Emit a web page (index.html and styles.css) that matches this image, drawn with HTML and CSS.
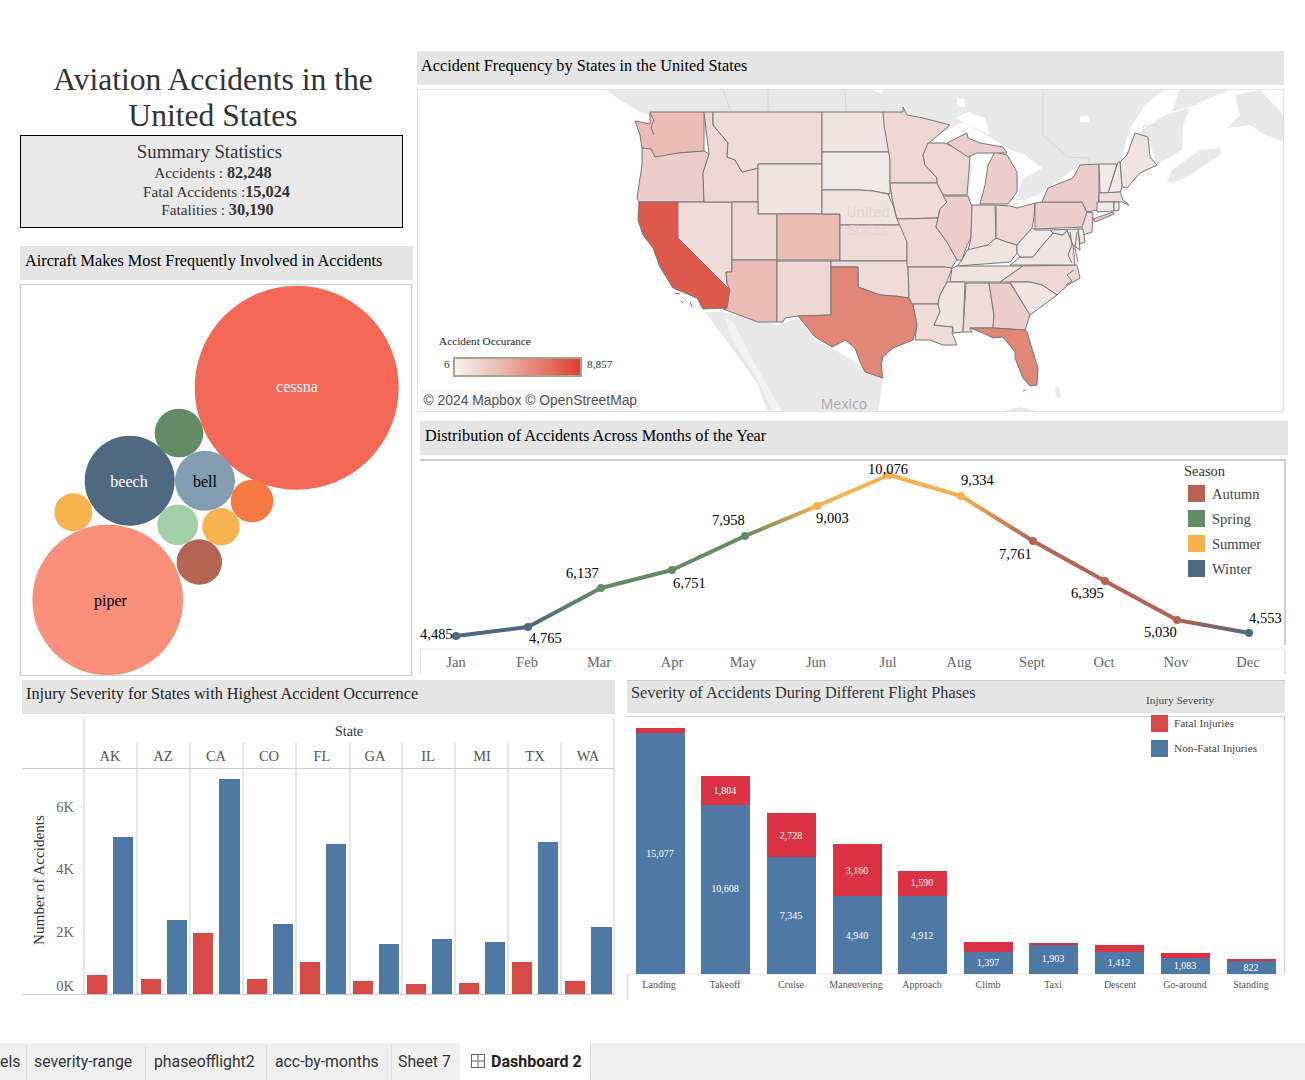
FILE: index.html
```html
<!DOCTYPE html>
<html lang="en">
<head>
<meta charset="utf-8">
<title>Aviation Accidents in the United States</title>
<link rel="stylesheet" href="styles.css">
</head>
<body>
<main class="dashboard">
  <div class="top-row">
    <section class="left-col">
      <h1 class="title">Aviation Accidents in the<br>United States</h1>
      <div class="stats">
        <h2 class="stats-head">Summary Statistics</h2>
        <p class="stat stat-a">Accidents : <b>82,248</b></p>
        <p class="stat stat-b">Fatal Accidents :<b>15,024</b></p>
        <p class="stat stat-c">Fatalities : <b>30,190</b></p>
      </div>
      <h2 class="head head-makes">Aircraft Makes Most Frequently Involved in Accidents</h2>
      <svg class="chart bubbles" viewBox="20 284 392 392" role="img" aria-label="Bubble chart of aircraft makes">
        <circle class="b-red" cx="296.7" cy="387.7" r="102"/>
        <circle class="b-salmon" cx="107.7" cy="600" r="75.3"/>
        <circle class="b-navy" cx="129.7" cy="480.7" r="45"/>
        <circle class="b-steel" cx="205" cy="480.7" r="30"/>
        <circle class="b-green" cx="179" cy="433" r="24.3"/>
        <circle class="b-yellow" cx="73.3" cy="512.3" r="19"/>
        <circle class="b-mint" cx="177.7" cy="524.7" r="20.3"/>
        <circle class="b-yellow" cx="221" cy="526.7" r="18.7"/>
        <circle class="b-orange" cx="252" cy="501" r="21.3"/>
        <circle class="b-brown" cx="199.3" cy="562" r="22.7"/>
        <text class="bub-label light" x="297" y="392">cessna</text>
        <text class="bub-label" x="110.500" y="606">piper</text>
        <text class="bub-label light" x="129" y="487">beech</text>
        <text class="bub-label" x="205" y="487">bell</text>
      </svg>
    </section>
    <section class="right-col">
      <h2 class="head head-map">Accident Frequency by States in the United States</h2>
      <svg class="chart map" viewBox="417 89 867 323" role="img" aria-label="Map of accident frequency by state">
        <!-- land -->
        <polygon class="land" points="605,89 1165,89 1145,105 1130,128 1125,145 1120,165 1080,165 1030,200 900,200 640,112 620,100"/>
        <polygon class="land" points="1135,135 1165,115 1190,108 1183,125 1182,150 1157,165 1148,137"/>
        <polygon class="land" points="1167,182 1172,170 1200,150 1220,148 1222,153 1190,175 1172,183"/>
        <polygon class="land" points="1227,128 1240,115 1235,95 1260,90 1284,115 1284,142 1265,135 1250,125"/>
        <polygon class="land" points="1180,89 1230,89 1195,105 1172,112"/>
        <polygon class="land" points="705,312 723,312 777,325 798,318 815,340 835,350 860,365 883,378 878,412 768,412 758,385 735,352"/>
        <polygon class="sliver" points="724,317 733,322 752,358 775,400 783,412 773,412 755,375 735,345"/>
        <polygon class="land" points="1000,412 1020,407 1040,412"/>
        <polygon class="land" points="1055,388 1059,386 1061,398 1056,396"/>
        <!-- lakes and small water -->
        <polygon class="water" points="922,142 963,122 995,140 1010,150 980,143 968,138 967,133 947,143"/>
        <polygon class="water" points="955,118 968,112 985,118 990,135 975,128"/>
        <polygon class="water" points="968,157 977,153 995,152 988,165 985,185 980,204 972,205 969,190 972,170"/>
        <polygon class="water" points="1003,147 1025,155 1042,168 1022,180 1018,195 1012,205 1045,192 1050,186 1074,177 1070,183 1050,192 1010,209 1000,200"/>
        <polygon class="water" points="957,98 965,99 965,107 957,106"/>
        <polygon class="water" points="1080,117 1088,116 1090,122 1080,122"/>
        <polygon class="water" points="870,89 885,89 880,93"/>
        <!-- borders -->
        <polyline class="border" points="1043,89 1043,135 1068,157 1089,158 1089,164"/>
        <polyline class="border" points="723,89 730,110"/>
        <polyline class="border" points="768,89 768,111"/>
        <polyline class="border" points="845,89 846,111"/>
        <polyline class="border" points="1143,134 1143,126 1158,125"/>
        <!-- states -->
        <polygon class="t6" points="650,112 704,112 704,151 692,152 678,153 664,156 655,157 651,149 642,148 640,135 635,121 650,124"/>
        <polygon class="t5" points="642,148 651,149 655,157 678,153 704,151 709,154 703,173 704,202 639,202 637,198 642,165"/>
        <polygon class="t8" points="639,202 678,202 678,238 730,290 727,308 703,309 697,298 673,288 660,267 653,248 643,235 638,220"/>
        <polygon class="t3" points="678,202 732,202 732,272 726,272 727,283 730,290 678,238"/>
        <polygon class="t4" points="704,112 713,112 713,125 728,143 727,157 735,160 742,172 758,168 758,202 704,202 703,173 709,154"/>
        <polygon class="t3" points="713,112 822,112 822,164 758,164 758,168 742,172 735,160 727,157 728,143 713,125"/>
        <polygon class="t2" points="758,164 822,164 822,214 758,214"/>
        <polygon class="t4" points="732,202 758,202 758,214 777,214 777,260 732,260"/>
        <polygon class="t6" points="777,214 840,214 840,260 777,260"/>
        <polygon class="t6" points="732,260 777,260 777,322 758,322 723,309 727,308 730,290 727,283 726,272 732,272"/>
        <polygon class="t4" points="777,261 831,261 831,315 798,316 785,318 783,322 777,322"/>
        <polygon class="t2" points="822,112 884,112 890,152 822,152"/>
        <polygon class="t1" points="822,152 890,152 890,194 873,191 860,190 822,190"/>
        <polygon class="t2" points="822,190 860,190 873,191 888,194 893,205 897,219 902,225 840,225 840,214 822,214"/>
        <polygon class="t3" points="840,225 902,225 907,235 907,261 840,261"/>
        <polygon class="t3" points="831,261 907,261 908,267 909,298 895,296 880,295 858,287 858,267 831,267"/>
        <polygon class="t7" points="831,267 858,267 858,287 880,295 895,296 909,298 913,305 917,325 913,340 893,348 883,357 881,365 883,378 865,372 860,362 855,348 845,340 832,347 815,337 798,316 831,315"/>
        <polygon class="t4" points="883,112 903,112 903,107 907,115 923,118 950,125 930,142 928,144 923,155 925,165 937,178 937,183 890,183 890,160 884,125"/>
        <polygon class="t3" points="890,183 937,183 943,195 947,202 940,209 938,218 897,219 892,198"/>
        <polygon class="t4" points="897,219 938,218 936,227 947,242 957,260 952,267 945,272 945,267 907,267 907,242"/>
        <polygon class="t4" points="908,267 945,267 952,268 947,282 940,295 938,304 912,304 909,298"/>
        <polygon class="t3" points="913,304 938,304 940,312 934,325 953,327 952,333 957,345 943,345 930,340 915,340 917,325"/>
        <polygon class="t4" points="928,143 945,143 970,155 969,170 967,195 943,195 937,183 937,178 925,165 923,155"/>
        <polygon class="t5" points="943,196 968,196 972,207 971,238 967,245 962,260 957,260 947,242 936,227 938,218 940,209 947,202"/>
        <polygon class="t3" points="972,205 995,205 996,238 988,245 968,251 971,238"/>
        <polygon class="t2" points="967,250 988,245 996,238 1007,242 1017,245 1017,253 1010,262 957,266 962,260"/>
        <polygon class="t4" points="996,205 1010,206 1017,208 1035,203 1034,218 1032,228 1017,245 1007,242 996,238"/>
        <polygon class="t5" points="980,204 985,185 988,165 995,152 1007,155 1017,172 1017,192 1008,204"/>
        <polygon class="t5" points="947,143 967,133 968,138 980,143 1003,147 1007,153 977,153 968,157"/>
        <polygon class="t2" points="950,282 952,268 957,266 1023,266 1000,282"/>
        <polygon class="t4" points="1023,266 1077,265 1080,278 1068,285 1057,295 1042,285 1030,282 1010,282 1000,282"/>
        <polygon class="t2" points="1010,265 1020,257 1033,257 1040,248 1053,233 1063,235 1067,230 1073,245 1075,265"/>
        <polygon class="t1" points="1017,245 1032,228 1034,229 1035,230 1050,230 1053,233 1040,248 1033,257 1020,257 1017,253"/>
        <polygon class="t5" points="1035,203 1042,202 1082,202 1087,212 1083,227 1035,229"/>
        <polygon class="t5" points="1042,202 1048,188 1073,178 1080,165 1099,164 1099,198 1097,210 1087,212 1082,202"/>
        <polygon class="t5" points="1093,219 1113,212 1114,214 1095,222"/>
        <polygon class="t3" points="1087,212 1093,213 1092,232 1083,235 1082,227"/>
        <polygon class="t1" points="1050,230 1078,229 1080,250 1073,245 1067,230 1063,235 1053,233"/>
        <polygon class="t1" points="1078,229 1083,229 1085,242 1080,244"/>
        <polygon class="t2" points="1122,187 1120,162 1127,155 1135,133 1148,137 1150,157 1157,165 1140,173 1127,188"/>
        <polygon class="t1" points="1108,193 1118,162 1120,162 1122,187 1120,192"/>
        <polygon class="t1" points="1099,164 1117,164 1108,193 1100,193"/>
        <polygon class="t3" points="1099,193 1120,192 1123,200 1129,205 1122,202 1099,202"/>
        <polygon class="t1" points="1097,202 1114,202 1114,211 1097,212"/>
        <polygon class="t1" points="1114,202 1119,202 1119,210 1114,211"/>
        <polygon class="t2" points="947,282 965,282 963,332 953,333 953,327 934,325 940,312 938,304 940,295"/>
        <polygon class="t3" points="966,283 989,283 994,315 993,328 970,328 972,332 963,332"/>
        <polygon class="t5" points="989,283 1010,283 1030,315 1025,330 993,328 994,315"/>
        <polygon class="t2" points="1010,282 1030,282 1042,285 1057,295 1030,315"/>
        <polygon class="t7" points="970,328 993,328 1025,330 1027,332 1033,352 1038,368 1037,385 1030,386 1023,378 1015,358 1015,352 1003,337 993,338 983,333"/>
        <!-- coast details -->
        <polyline class="coast" points="650,113 654,120 651,127 654,135"/>
        <polyline class="coast" points="1070,232 1072,245 1068,255 1072,263"/>
        <polyline class="coast" points="1077,232 1075,248 1078,262"/>
        <polyline class="coast" points="1074,270 1067,275 1072,281 1066,285"/>
        <polyline class="coast" points="674,293 680,294"/>
        <polyline class="coast" points="681,301 683,303"/>
        <polyline class="coast" points="690,302 692,307"/>
        <polyline class="coast" points="1023,391 1026,390"/>
        <!-- labels -->
        <text class="map-ghost" x="868" y="217">United</text>
        <text class="map-ghost" x="868" y="235">States</text>
        <text class="map-mexico" x="844" y="409">Mexico</text>
        <text class="leg-title" x="439" y="345">Accident Occurance</text>
        <text class="leg-val" x="444" y="368">6</text>
        <text class="leg-val" x="587" y="368">8,857</text>
        <defs>
          <linearGradient id="ramp"><stop offset="0" stop-color="#f6f3f1"/><stop offset="0.35" stop-color="#ebbdb6"/><stop offset="1" stop-color="#dc3f2b"/></linearGradient>
        </defs>
        <rect class="ramp" x="454" y="358" width="127" height="18"/>
        <rect class="attr-bg" x="420" y="390" width="220" height="20"/>
        <text class="attribution" x="423.500" y="405">© 2024 Mapbox © OpenStreetMap</text>
      </svg>
      <h2 class="head head-months">Distribution of Accidents Across Months of the Year</h2>
      <svg class="chart months" viewBox="420 459 866 216" role="img" aria-label="Line chart of accidents by month">
        <defs>
          <linearGradient id="g-wi-sp" gradientUnits="userSpaceOnUse" x1="528" y1="627" x2="601" y2="588"><stop offset="0" stop-color="#4f6980"/><stop offset="1" stop-color="#638b66"/></linearGradient>
          <linearGradient id="g-sp-su" gradientUnits="userSpaceOnUse" x1="745" y1="536" x2="817" y2="506"><stop offset="0" stop-color="#638b66"/><stop offset="1" stop-color="#fbb04e"/></linearGradient>
          <linearGradient id="g-su-au" gradientUnits="userSpaceOnUse" x1="961" y1="496" x2="1033" y2="541"><stop offset="0" stop-color="#fbb04e"/><stop offset="1" stop-color="#b66353"/></linearGradient>
          <linearGradient id="g-au-wi" gradientUnits="userSpaceOnUse" x1="1177" y1="620" x2="1249" y2="633"><stop offset="0" stop-color="#b66353"/><stop offset="1" stop-color="#4f6980"/></linearGradient>
        </defs>
        <polyline class="frame" points="420,460 1285,460 1285,645"/>
        <line class="axis" x1="420" y1="649" x2="1286" y2="649"/>
        <line class="frame-thin" x1="420" y1="650" x2="420" y2="674"/>
        <line class="frame-thin" x1="1285" y1="650" x2="1285" y2="674"/>
        <line class="seg wi" x1="456" y1="636" x2="528" y2="627"/>
        <line class="seg" stroke="url(#g-wi-sp)" x1="528" y1="627" x2="601" y2="588"/>
        <polyline class="seg sp" points="601,588 672,570 745,536"/>
        <line class="seg" stroke="url(#g-sp-su)" x1="745" y1="536" x2="817" y2="506"/>
        <polyline class="seg su" points="817,506 889,475 961,496"/>
        <line class="seg" stroke="url(#g-su-au)" x1="961" y1="496" x2="1033" y2="541"/>
        <polyline class="seg au" points="1033,541 1105,581 1177,620"/>
        <line class="seg" stroke="url(#g-au-wi)" x1="1177" y1="620" x2="1249" y2="633"/>
        <circle class="dot-wi" cx="456" cy="636" r="4"/><circle class="dot-wi" cx="528" cy="627" r="4"/>
        <circle class="dot-sp" cx="601" cy="588" r="4"/><circle class="dot-sp" cx="672" cy="570" r="4"/><circle class="dot-sp" cx="745" cy="536" r="4"/>
        <circle class="dot-su" cx="817" cy="506" r="4"/><circle class="dot-su" cx="889" cy="475" r="4"/><circle class="dot-su" cx="961" cy="496" r="4"/>
        <circle class="dot-au" cx="1033" cy="541" r="4"/><circle class="dot-au" cx="1105" cy="581" r="4"/><circle class="dot-au" cx="1177" cy="620" r="4"/>
        <circle class="dot-wi" cx="1249" cy="633" r="4"/>
        <g class="val">
          <text x="420" y="639">4,485</text><text x="529" y="643">4,765</text><text x="566" y="578">6,137</text>
          <text x="673" y="588">6,751</text><text x="712" y="525">7,958</text><text x="816" y="523">9,003</text>
          <text x="868" y="474">10,076</text><text x="961" y="485">9,334</text><text x="999" y="559">7,761</text>
          <text x="1071" y="598">6,395</text><text x="1144" y="637">5,030</text><text x="1249" y="623">4,553</text>
        </g>
        <g class="month">
          <text x="456" y="667">Jan</text><text x="527" y="667">Feb</text><text x="599" y="667">Mar</text><text x="672" y="667">Apr</text>
          <text x="743" y="667">May</text><text x="816" y="667">Jun</text><text x="888" y="667">Jul</text><text x="959" y="667">Aug</text>
          <text x="1032" y="667">Sept</text><text x="1104" y="667">Oct</text><text x="1176" y="667">Nov</text><text x="1248" y="667">Dec</text>
        </g>
        <text class="season-title" x="1184" y="476">Season</text>
        <rect class="fill-au" x="1188" y="485" width="17" height="17"/><text class="season" x="1212" y="499">Autumn</text>
        <rect class="fill-sp" x="1188" y="510" width="17" height="17"/><text class="season" x="1212" y="524">Spring</text>
        <rect class="fill-su" x="1188" y="535" width="17" height="17"/><text class="season" x="1212" y="549">Summer</text>
        <rect class="fill-wi" x="1188" y="560" width="17" height="17"/><text class="season" x="1212" y="574">Winter</text>
      </svg>
    </section>
  </div>
  <div class="bottom-row">
    <section class="states-col">
      <h2 class="head head-states">Injury Severity for States with Highest Accident Occurrence</h2>
      <svg class="chart states" viewBox="22 714 593 286" role="img" aria-label="Bar chart of injury severity by state">
        <g class="grid-v">
          <line x1="84" y1="718" x2="84" y2="994"/><line x1="137" y1="743" x2="137" y2="994"/><line x1="190" y1="743" x2="190" y2="994"/>
          <line x1="243" y1="743" x2="243" y2="994"/><line x1="296" y1="743" x2="296" y2="994"/><line x1="350" y1="743" x2="350" y2="994"/>
          <line x1="402" y1="743" x2="402" y2="994"/><line x1="455" y1="743" x2="455" y2="994"/><line x1="508" y1="743" x2="508" y2="994"/>
          <line x1="561" y1="743" x2="561" y2="994"/><line x1="614" y1="718" x2="614" y2="994"/>
          <line x1="22" y1="768.500" x2="615" y2="768.500"/><line x1="22" y1="994.500" x2="615" y2="994.500"/>
        </g>
        <g class="grid-ticks">
          <line x1="78" y1="807" x2="84" y2="807"/><line x1="78" y1="869" x2="84" y2="869"/><line x1="78" y1="932" x2="84" y2="932"/>
        </g>
        <text class="st-title" x="349" y="736">State</text>
        <g class="st-head">
          <text x="110" y="761">AK</text><text x="163" y="761">AZ</text><text x="216" y="761">CA</text><text x="269" y="761">CO</text><text x="322" y="761">FL</text>
          <text x="375" y="761">GA</text><text x="428" y="761">IL</text><text x="482" y="761">MI</text><text x="535" y="761">TX</text><text x="588" y="761">WA</text>
        </g>
        <g class="st-y">
          <text x="74" y="812">6K</text><text x="74" y="874">4K</text><text x="74" y="937">2K</text><text x="74" y="991">0K</text>
        </g>
        <text class="st-axis" transform="translate(44 880) rotate(-90)">Number of Accidents</text>
        <g class="red">
          <rect x="87" y="975" width="20" height="19"/><rect x="141" y="979" width="20" height="15"/><rect x="193" y="933" width="20" height="61"/>
          <rect x="247" y="979" width="20" height="15"/><rect x="300" y="962" width="20" height="32"/><rect x="353" y="981" width="20" height="13"/>
          <rect x="406" y="984" width="20" height="10"/><rect x="459" y="983" width="20" height="11"/><rect x="512" y="962" width="20" height="32"/>
          <rect x="565" y="981" width="20" height="13"/>
        </g>
        <g class="blue">
          <rect x="113" y="837" width="20" height="157"/><rect x="167" y="920" width="20" height="74"/><rect x="219" y="779" width="21" height="215"/>
          <rect x="273" y="924" width="20" height="70"/><rect x="326" y="844" width="20" height="150"/><rect x="379" y="944" width="20" height="50"/>
          <rect x="432" y="939" width="20" height="55"/><rect x="485" y="942" width="20" height="52"/><rect x="538" y="842" width="20" height="152"/>
          <rect x="591" y="927" width="21" height="67"/>
        </g>
      </svg>
    </section>
    <section class="phases-col">
      <h2 class="head head-phases">Severity of Accidents During Different Flight Phases</h2>
      <svg class="chart phases" viewBox="627 713 658 287" role="img" aria-label="Stacked bars of severity by flight phase">
        <polyline class="frame-thin" points="627,716.500 1284.500,716.500 1284.500,974"/>
        <line class="axis" x1="627" y1="974.500" x2="1285" y2="974.500"/>
        <line class="frame-thin" x1="627.500" y1="974" x2="627.500" y2="1000"/>
        <g class="dark-red">
          <rect x="636" y="728" width="49" height="5"/><rect x="701" y="776" width="49" height="29"/><rect x="767" y="813" width="49" height="44"/>
          <rect x="833" y="844" width="49" height="52"/><rect x="898" y="871" width="49" height="25"/><rect x="964" y="942" width="49" height="10"/>
          <rect x="1029" y="943" width="49" height="2"/><rect x="1095" y="945" width="49" height="7"/><rect x="1161" y="953" width="49" height="5"/>
          <rect x="1227" y="959" width="49" height="2"/>
        </g>
        <g class="blue">
          <rect x="636" y="733" width="49" height="241"/><rect x="701" y="805" width="49" height="169"/><rect x="767" y="857" width="49" height="117"/>
          <rect x="833" y="896" width="49" height="78"/><rect x="898" y="896" width="49" height="78"/><rect x="964" y="952" width="49" height="22"/>
          <rect x="1029" y="945" width="49" height="29"/><rect x="1095" y="952" width="49" height="22"/><rect x="1161" y="958" width="49" height="16"/>
          <rect x="1227" y="961" width="49" height="13"/>
        </g>
        <g class="bar-val">
          <text x="660" y="857">15,077</text>
          <text x="725" y="794">1,804</text><text x="725" y="892">10,608</text>
          <text x="791" y="839">2,728</text><text x="791" y="919">7,345</text>
          <text x="857" y="874">3,160</text><text x="857" y="939">4,940</text>
          <text x="922" y="886">1,590</text><text x="922" y="939">4,912</text>
          <text x="988" y="966">1,397</text><text x="1053" y="962">1,903</text><text x="1119" y="966">1,412</text>
          <text x="1185" y="969">1,083</text><text x="1251" y="971">822</text>
        </g>
        <g class="cat">
          <text x="659" y="988">Landing</text><text x="725" y="988">Takeoff</text><text x="791" y="988">Cruise</text><text x="856" y="988">Maneuvering</text><text x="922" y="988">Approach</text>
          <text x="988" y="988">Climb</text><text x="1053" y="988">Taxi</text><text x="1120" y="988">Descent</text><text x="1185" y="988">Go-around</text><text x="1251" y="988">Standing</text>
        </g>
        <rect class="swatch-red" x="1151" y="715" width="17" height="17"/>
        <rect class="swatch-blue" x="1151" y="740" width="17" height="17"/>
        <text class="cat-leg" x="1174" y="727">Fatal Injuries</text>
        <text class="cat-leg" x="1174" y="752">Non-Fatal Injuries</text>
      </svg>
      <span class="phase-legend-title">Injury Severity</span>
    </section>
  </div>
  <nav class="tabbar">
    <span class="tab tab-cut">els</span>
    <span class="tab tab-sev">severity-range</span>
    <span class="tab tab-ph">phaseofflight2</span>
    <span class="tab tab-acc">acc-by-months</span>
    <span class="tab tab-sh">Sheet 7</span>
    <span class="tab tab-active">
      <svg class="tab-icon" viewBox="0 0 14 14" aria-hidden="true"><rect x="0.500" y="0.500" width="13" height="13"/><line x1="7" y1="1" x2="7" y2="13"/><line x1="1" y1="7" x2="13" y2="7"/></svg>
      Dashboard 2
    </span>
  </nav>
</main>
</body>
</html>
```
FILE: styles.css
```css
* { box-sizing: border-box; }
html, body { margin: 0; padding: 0; background: #fff; }
body { font-family: "Liberation Serif", "Times New Roman", serif; color: #000; overflow: hidden; }
.dashboard { width: 1305px; height: 1080px; display: flex; flex-direction: column; padding-top: 51px; }
.chart { display: block; }
.top-row { display: flex; height: 629px; padding-left: 20px; }
.left-col { width: 393px; display: flex; flex-direction: column; }
.right-col { width: 871px; margin-left: 4px; display: flex; flex-direction: column; }
.title { margin: 0; padding: 11px 7px 1px 0; font-weight: 400; font-size: 31.600px; line-height: 36px; text-align: center; color: #333; height: 84px; }
.stats { width: 383px; height: 93px; border: 1px solid #000; background: #e9e9e9; color: #333; text-align: center; padding-top: 4px; }
.stats-head { margin: 0 4px 0 0; font-weight: 400; font-size: 18.750px; line-height: 24px; }
.stat { margin: 0; font-size: 15.200px; line-height: 18.500px; }
.stat b { font-size: 16.300px; }
.stat-a { padding-left: 3px; }
.stat-b { padding-left: 10px; }
.stat-c { padding-left: 12px; }
.head { margin: 0; height: 34px; background: #e5e5e5; font-weight: 400; font-size: 16.250px; line-height: 30px; padding-left: 5px; white-space: nowrap; }
.head-makes { margin-top: 18px; width: 393px; }
.bubbles { margin-top: 4px; width: 392px; height: 392px; outline: 1px solid #ccc; outline-offset: -1px; }
.b-red { fill: #f56855; } .b-salmon { fill: #fb8f79; } .b-navy { fill: #4f6980; } .b-steel { fill: #849db1; }
.b-green { fill: #638b66; } .b-yellow { fill: #f9b250; } .b-mint { fill: #a2ceaa; } .b-orange { fill: #f47942; } .b-brown { fill: #b66353; }
.bub-label { font-size: 16px; text-anchor: middle; fill: #000; }
.bub-label.light { fill: #fff; }
.head-map { width: 867px; padding-left: 4px; }
.map { margin-top: 4px; width: 867px; height: 323px; outline: 1px solid #e2e2e2; outline-offset: -1px; }
.land { fill: #e8e8e8; }
.sliver { fill: #f3f3f3; }
.water { fill: #fff; }
.border { fill: none; stroke: #d0d0d0; stroke-width: 0.800; }
.coast { fill: none; stroke: #777; stroke-width: 1; }
.map polygon[class^="t"] { stroke: #777; stroke-width: 1; stroke-linejoin: round; }
.t1 { fill: #f0e9e7; } .t2 { fill: #f0e3e0; } .t3 { fill: #efdcd9; } .t4 { fill: #eed6d2; }
.t5 { fill: #edcdc9; } .t6 { fill: #ebbdb6; } .t7 { fill: #e28678; } .t8 { fill: #dd5a4a; }
.map-ghost { font-family: "Open Sans", sans-serif; font-size: 14px; fill: #e4d4d1; text-anchor: middle; }
.map-mexico { font-family: "Open Sans", sans-serif; font-size: 14px; fill: #a9a9a9; text-anchor: middle; }
.leg-title { font-size: 11.300px; fill: #222; }
.leg-val { font-size: 11.300px; fill: #333; }
.ramp { fill: url(#ramp); stroke: #a8a290; stroke-width: 2; }
.attr-bg { fill: #f6f6f6; }
.attribution { font-family: "Liberation Sans", Arial, sans-serif; font-size: 13.850px; fill: #555; }
.head-months { margin: 9px 0 0 3px; width: 868px; padding-left: 5px; }
.months { margin: 4px 0 0 3px; width: 866px; height: 216px; }
.frame { fill: none; stroke: #cfcfcf; stroke-width: 2; }
.frame-thin { fill: none; stroke: #cfcfcf; stroke-width: 1; }
.axis { stroke: #f0f0f0; stroke-width: 1.500; }
.seg { fill: none; stroke-width: 4; stroke-linecap: round; stroke-linejoin: round; }
.wi { stroke: #4f6980; } .sp { stroke: #638b66; } .su { stroke: #fbb04e; } .au { stroke: #b66353; }
.dot-wi, .fill-wi { fill: #4f6980; } .dot-sp, .fill-sp { fill: #638b66; } .dot-su, .fill-su { fill: #fbb04e; } .dot-au, .fill-au { fill: #b66353; }
.val text { font-size: 14.500px; fill: #000; }
.month text { font-size: 14.500px; fill: #666; text-anchor: middle; }
.season-title { font-size: 14.500px; fill: #333; }
.season { font-size: 14.500px; fill: #444; }
.bottom-row { display: flex; padding-left: 22px; }
.states-col { width: 593px; }
.head-states { padding-left: 4px; color: #222; line-height: 28px; }
.head-phases { padding-left: 4px; line-height: 24px; color: #333; height: 33px; border-top: 1px solid #ccc; }
.states { width: 593px; height: 286px; }
.phases-col { width: 658px; margin-left: 12px; position: relative; }
.phases { width: 658px; height: 287px; }
.grid-v line { stroke: #cfcfcf; stroke-width: 1; }
.grid-ticks line { stroke: #eee; stroke-width: 1; }
.st-title { font-size: 14px; fill: #333; text-anchor: middle; }
.st-head text { font-size: 14.500px; fill: #555; text-anchor: middle; }
.st-y text { font-size: 14.500px; fill: #666; text-anchor: end; }
.st-axis { font-size: 15.200px; fill: #333; text-anchor: middle; }
.red rect, .swatch-red { fill: #d64b45; }
.dark-red rect { fill: #db3343; }
.blue rect, .swatch-blue { fill: #4e79a7; }
.bar-val text { font-size: 10px; fill: #fff; text-anchor: middle; }
.cat text { font-size: 10px; fill: #555; text-anchor: middle; }
.cat-leg { font-size: 11.300px; fill: #444; }
.phase-legend-title { position: absolute; left: 519px; top: 14px; font-size: 11.300px; line-height: 12px; color: #444; }
.tabbar { margin-top: auto; height: 37px; background: #f0f0f0; display: flex; font-family: Roboto, Arial, sans-serif; font-size: 15.800px; color: #333; }
.tab { display: flex; align-items: center; height: 100%; border-right: 1px solid #e0e0e0; white-space: nowrap; padding-bottom: 1px; }
.tab-cut { width: 27px; justify-content: flex-start; }
.tab-sev { width: 119px; padding-left: 7px; }
.tab-ph { width: 121px; padding-left: 8px; }
.tab-acc { width: 125px; padding-left: 8px; }
.tab-sh { width: 68px; padding-left: 6px; border-right: 0; }
.tab-active { width: 131px; background: #fff; font-weight: 700; font-size: 16px; color: #222; padding-left: 11px; gap: 6px; border-right: 1px solid #ddd; }
.tab-icon { width: 14px; height: 14px; fill: none; stroke: #666; stroke-width: 1; }
```
